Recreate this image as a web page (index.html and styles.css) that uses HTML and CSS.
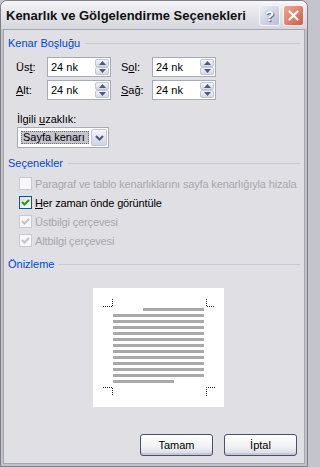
FILE: index.html
```html
<!DOCTYPE html>
<html lang="tr">
<head>
<meta charset="utf-8">
<title>Kenarlık ve Gölgelendirme Seçenekleri</title>
<link rel="stylesheet" href="styles.css">
</head>
<body>
<div class="window">
  <div class="titlebar">
    <span class="title">Kenarlık ve Gölgelendirme Seçenekleri</span>
    <div class="tb-buttons">
      <span class="tb-btn help">?</span>
      <span class="tb-btn close">
        <svg width="11" height="11" viewBox="0 0 11 11"><path d="M1.5 1.5 L9.5 9.5 M9.5 1.5 L1.5 9.5" stroke="#fff" stroke-width="2.2" stroke-linecap="round"/></svg>
      </span>
    </div>
  </div>
  <div class="client">
    <div class="ghead"><span>Kenar Boşluğu</span></div>
    <div class="margins">
      <span class="lbl">Üs<u>t</u>:</span>
      <div class="spin"><span class="val">24 nk</span><span class="spbtns"><span class="sb"><svg width="7" height="4" viewBox="0 0 7 4"><path d="M0 4 L3.5 0 L7 4 Z" fill="#4d5a78"/></svg></span><span class="sb"><svg width="7" height="4" viewBox="0 0 7 4"><path d="M0 0 L3.5 4 L7 0 Z" fill="#4d5a78"/></svg></span></span></div>
      <span class="lbl">S<u>o</u>l:</span>
      <div class="spin"><span class="val">24 nk</span><span class="spbtns"><span class="sb"><svg width="7" height="4" viewBox="0 0 7 4"><path d="M0 4 L3.5 0 L7 4 Z" fill="#4d5a78"/></svg></span><span class="sb"><svg width="7" height="4" viewBox="0 0 7 4"><path d="M0 0 L3.5 4 L7 0 Z" fill="#4d5a78"/></svg></span></span></div>
      <span class="lbl"><u>A</u>lt:</span>
      <div class="spin"><span class="val">24 nk</span><span class="spbtns"><span class="sb"><svg width="7" height="4" viewBox="0 0 7 4"><path d="M0 4 L3.5 0 L7 4 Z" fill="#4d5a78"/></svg></span><span class="sb"><svg width="7" height="4" viewBox="0 0 7 4"><path d="M0 0 L3.5 4 L7 0 Z" fill="#4d5a78"/></svg></span></span></div>
      <span class="lbl"><u>S</u>ağ:</span>
      <div class="spin"><span class="val">24 nk</span><span class="spbtns"><span class="sb"><svg width="7" height="4" viewBox="0 0 7 4"><path d="M0 4 L3.5 0 L7 4 Z" fill="#4d5a78"/></svg></span><span class="sb"><svg width="7" height="4" viewBox="0 0 7 4"><path d="M0 0 L3.5 4 L7 0 Z" fill="#4d5a78"/></svg></span></span></div>
    </div>
    <div class="field-label">İlgili <u>u</u>zaklık:</div>
    <div class="combo">
      <span class="combo-text">Sayfa kenarı</span>
      <span class="combo-btn"><svg width="9" height="6" viewBox="0 0 9 6"><path d="M1 1 L4.5 4.5 L8 1" fill="none" stroke="#4d5a78" stroke-width="2"/></svg></span>
    </div>
    <div class="ghead"><span>Seçenekler</span></div>
    <div class="checks">
      <div class="chk-row disabled"><span class="box"></span><span>Paragraf ve tablo kenarlıklarını sayfa kenarlığıyla hizala</span></div>
      <div class="chk-row"><span class="box on"><svg width="11" height="11" viewBox="0 0 11 11"><path d="M2 5 L4.5 7.5 L9 3" fill="none" stroke="#21a121" stroke-width="2.2"/></svg></span><span><u>H</u>er zaman önde görüntüle</span></div>
      <div class="chk-row disabled"><span class="box"><svg width="11" height="11" viewBox="0 0 11 11"><path d="M2 5 L4.5 7.5 L9 3" fill="none" stroke="#c4c3c9" stroke-width="2.2"/></svg></span><span>Üstbilgi çerçevesi</span></div>
      <div class="chk-row disabled"><span class="box"><svg width="11" height="11" viewBox="0 0 11 11"><path d="M2 5 L4.5 7.5 L9 3" fill="none" stroke="#c4c3c9" stroke-width="2.2"/></svg></span><span>Altbilgi çerçevesi</span></div>
    </div>
    <div class="ghead gh-preview"><span>Önizleme</span></div>
    <div class="preview">
      <svg width="131" height="119" viewBox="0 0 131 119">
        <rect width="131" height="119" fill="#fff"/>
        <g fill="none" stroke="#222" stroke-width="1" stroke-dasharray="1 1">
          <path d="M10 18.5 H19.5 V11"/>
          <path d="M113.5 11 V18.5 H122"/>
          <path d="M10 99.5 H19.5 V108"/>
          <path d="M113.5 108 V99.5 H122"/>
        </g>
        <g fill="#a9a9a9">
          <rect x="50" y="20" width="61" height="3"/>
          <rect x="20" y="26" width="91" height="3"/>
          <rect x="20" y="32" width="91" height="3"/>
          <rect x="20" y="38" width="91" height="3"/>
          <rect x="20" y="44" width="91" height="3"/>
          <rect x="20" y="50" width="91" height="3"/>
          <rect x="20" y="56" width="91" height="3"/>
          <rect x="20" y="62" width="91" height="3"/>
          <rect x="20" y="68" width="91" height="3"/>
          <rect x="20" y="74" width="91" height="3"/>
          <rect x="20" y="80" width="91" height="3"/>
          <rect x="20" y="86" width="91" height="3"/>
          <rect x="20" y="92" width="61" height="3"/>
        </g>
      </svg>
    </div>
    <div class="buttons">
      <span class="btn">Tamam</span>
      <span class="btn">İptal</span>
    </div>
  </div>
</div>
</body>
</html>
```
FILE: styles.css
```css
* { box-sizing: border-box; }

body {
  margin: 0;
  background: #c4c4cc;
  font-family: "Liberation Sans", Arial, sans-serif;
  font-size: 11px;
  color: #000;
}

.window {
  width: 308px;
  height: 467px;
  display: flex;
  flex-direction: column;
  background: #c2c2ca;
  border: 1px solid #7e7e88;
  border-radius: 7px 7px 0 0;
  overflow: hidden;
}

.titlebar {
  height: 28px;
  flex: none;
  display: flex;
  align-items: center;
  padding: 0 3px 0 5px;
  background: linear-gradient(#f7f7f9, #e6e6eb 40%, #d6d6de);
}

.title {
  flex: 1;
  font-weight: bold;
  font-size: 13px;
  color: #111;
}

.tb-buttons {
  display: flex;
  gap: 3px;
}

.tb-btn {
  width: 21px;
  height: 21px;
  border-radius: 3px;
  border: 1px solid #f4f4f8;
  display: flex;
  align-items: center;
  justify-content: center;
}

.help {
  background: linear-gradient(135deg, #eceef6, #b9bdd4);
  color: #fff;
  font-weight: bold;
  font-size: 15px;
  text-shadow: 0 0 1px #555a78, 1px 1px 0 #6a6f8c;
}

.close {
  background: linear-gradient(135deg, #eea890, #cf5c48);
}

.client {
  flex: 1;
  margin: 0 2px 2px;
  border: 1px solid #a6a6ae;
  background: #e0dfe3;
  padding-top: 6px;
}

.ghead {
  display: flex;
  align-items: center;
  height: 14px;
  padding: 0 4px;
  gap: 5px;
  color: #0046d5;
}

.ghead::after {
  content: "";
  flex: 1;
  height: 1px;
  background: #c8c8d0;
}

.margins {
  display: grid;
  grid-template-columns: 21px 64px 21px 64px;
  grid-auto-rows: 20px;
  column-gap: 10px;
  row-gap: 3px;
  align-items: center;
  padding-left: 12px;
  margin-top: 7px;
}

.lbl {
  white-space: nowrap;
}

.spin {
  height: 20px;
  display: flex;
  align-items: center;
  border: 1px solid #a5acb5;
  background: #fff;
  padding: 0 1px 0 3px;
}

.val {
  flex: 1;
}

.spbtns {
  display: flex;
  flex-direction: column;
}

.sb {
  width: 14px;
  height: 8px;
  display: flex;
  align-items: center;
  justify-content: center;
  border: 1px solid #c0c6d6;
  border-radius: 2px;
  background: linear-gradient(#f4f5fa, #d4d8e6);
}

.field-label {
  margin-top: 12px;
  padding-left: 13px;
  line-height: 14px;
}

.combo {
  margin: 1px 0 0 13px;
  width: 92px;
  height: 21px;
  display: flex;
  border: 1px solid #a5acb5;
  background: #fff;
  padding: 1px;
}

.combo-text {
  flex: 1;
  margin: 2px;
  background: #c6c5cd;
  border: 1px dotted #6a6a70;
  line-height: 11px;
  padding-left: 1px;
}

.combo-btn {
  width: 16px;
  display: flex;
  align-items: center;
  justify-content: center;
  border: 1px solid #c0c6d6;
  border-radius: 2px;
  background: linear-gradient(#f4f5fa, #d0d4e4);
}

.combo + .ghead {
  margin-top: 8px;
}

.checks {
  margin-top: 4px;
}

.chk-row {
  height: 19px;
  display: flex;
  align-items: center;
  gap: 3px;
  padding-left: 15px;
  letter-spacing: -0.15px;
}

.box {
  width: 13px;
  height: 13px;
  flex: none;
  display: flex;
  align-items: center;
  justify-content: center;
  border: 1px solid #cac9cf;
  background: #f7f7f9;
}

.box.on {
  border-color: #1c5180;
  background: linear-gradient(135deg, #dcdcd7, #fff);
}

.disabled {
  color: #a8a7ad;
}

.gh-preview {
  margin-top: 7px;
}

.preview {
  margin: 17px 0 0 89px;
  width: 131px;
  height: 119px;
}

.preview svg {
  display: block;
}

.buttons {
  display: flex;
  justify-content: flex-end;
  gap: 11px;
  padding-right: 7px;
  margin-top: 27px;
}

.btn {
  width: 73px;
  height: 22px;
  display: flex;
  align-items: center;
  justify-content: center;
  border: 1px solid #4a5068;
  border-radius: 3px;
  background: linear-gradient(#ffffff, #f0f0f4 60%, #d6d8e4);
  box-shadow: inset 0 -2px 0 #c6c8d6;
}
```
